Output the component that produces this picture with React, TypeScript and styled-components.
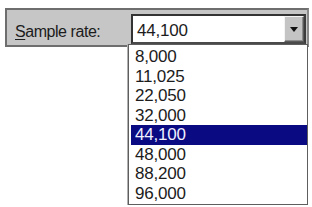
import React from "react";
import styled, { createGlobalStyle } from "styled-components";

const GlobalStyle = createGlobalStyle`
  html, body {
    margin: 0;
    padding: 0;
    background: #ffffff;
  }
  body {
    width: 312px;
    height: 207px;
    overflow: hidden;
    font-family: "Liberation Sans", Arial, sans-serif;
    color: #1c1c1c;
  }
`;

const Page = styled.div`
  padding: 8px 3px 0 5px;
`;

const Panel = styled.div`
  display: flex;
  align-items: flex-start;
  box-sizing: border-box;
  width: 304px;
  height: 39px;
  padding: 4px 0 0 8px;
  background: #c6c6c6;
  border: 2px solid #6e6e6e;
  border-right-color: #8a8a8a;
`;

const Label = styled.label`
  width: 116px;
  padding-top: 9px;
  font-size: 16px;
  line-height: 18px;
  letter-spacing: -0.45px;
  white-space: nowrap;

  u {
    text-decoration-thickness: 1px;
    text-underline-offset: 2px;
  }
`;

const Combo = styled.div`
  position: relative;
  display: flex;
  align-items: stretch;
  box-sizing: border-box;
  width: 175px;
  height: 30px;
  background: #ffffff;
  border: 2px solid #333333;
  border-bottom-color: #4a4a4a;
  border-right-color: #3c3c3c;
`;

const Value = styled.div`
  flex: 1;
  padding: 5px 0 0 4px;
  font-size: 17px;
  line-height: 20px;
  letter-spacing: -0.2px;
`;

const DropButton = styled.div`
  display: flex;
  align-items: center;
  justify-content: center;
  box-sizing: border-box;
  width: 20px;
  background: #c4c4c4;
  border: 1px solid;
  border-color: #f4f4f4 #5a5a5a #5a5a5a #f4f4f4;
  box-shadow: inset -1px -1px 0 #8c8c8c;
`;

const Arrow = styled.span`
  width: 0;
  height: 0;
  border-left: 4px solid transparent;
  border-right: 4px solid transparent;
  border-top: 5px solid #111111;
  margin-top: 1px;
`;

const List = styled.ul`
  position: absolute;
  top: 28px;
  left: -5px;
  box-sizing: border-box;
  width: 180px;
  margin: 0;
  padding: 2px 0 1px 2px;
  list-style: none;
  background: #ffffff;
  border: 1px solid #5e5e5e;
  box-shadow: -1px 0 0 #b0b0b0;
`;

const Item = styled.li<{ $selected?: boolean }>`
  height: 19.5px;
  padding-left: 4px;
  font-size: 17px;
  line-height: 19.5px;
  letter-spacing: -0.2px;
  background: ${(p) => (p.$selected ? "#0a0a82" : "transparent")};
  color: ${(p) => (p.$selected ? "#f0f0ff" : "#1c1c1c")};
`;

const rates = ["8,000", "11,025", "22,050", "32,000", "44,100", "48,000", "88,200", "96,000"];

const App: React.FC = () => {
  const selected = "44,100";

  return (
    <Page>
      <GlobalStyle />
      <Panel>
        <Label>
          <u>S</u>ample rate:
        </Label>
        <Combo>
          <Value>{selected}</Value>
          <DropButton>
            <Arrow />
          </DropButton>
          <List>
            {rates.map((r) => (
              <Item key={r} $selected={r === selected}>
                {r}
              </Item>
            ))}
          </List>
        </Combo>
      </Panel>
    </Page>
  );
};

export default App;
